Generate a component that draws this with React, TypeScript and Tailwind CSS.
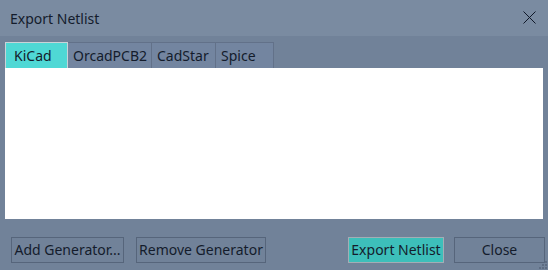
const tabs = [
  { name: 'KiCad', w: 'w-[63px]' },
  { name: 'OrcadPCB2', w: 'w-[84px]' },
  { name: 'CadStar', w: 'w-[64px]' },
  { name: 'Spice', w: 'w-[58px]' },
]

function Btn({ label, w, primary }: { label: string; w: string; primary?: boolean }) {
  return (
    <button
      className={`h-[26px] ${w} flex items-center justify-center border text-[14px] leading-none text-[#141c2c] ${
        primary ? 'bg-[#3dbfba] border-[#a3adb5]' : 'bg-[#718299] border-[#56657b]'
      }`}
    >
      {label}
    </button>
  )
}

export default function App() {
  return (
    <div
      className="w-[548px] h-[270px] flex flex-col bg-[#718299] text-[#141c2c] relative"
      style={{ fontFamily: '"Noto Sans", "Open Sans", sans-serif' }}
    >
      {/* Title bar */}
      <div className="h-[36px] flex items-center justify-between bg-[#7a8ba1] pl-[10px] pr-[12px]">
        <span className="text-[14px]">Export Netlist</span>
        <svg width="13" height="13" viewBox="0 0 13 13" className="mt-[-1px]">
          <path d="M0.5 0.5 L12.5 12.5 M12.5 0.5 L0.5 12.5" stroke="#101828" strokeWidth="1" />
        </svg>
      </div>

      {/* Tabs */}
      <div className="flex pl-[5px] pt-[6px] h-[32px]">
        {tabs.map((t, i) => (
          <div
            key={t.name}
            className={`h-[26px] ${t.w} flex items-center text-[14px] border-r border-t ${
              i === 0
                ? 'bg-[#4fd8d5] border-l border-[#c9d3d8] pl-[8px]'
                : 'bg-[#7385a0] border-[#627189] pl-[5px]'
            }`}
          >
            {t.name}
          </div>
        ))}
      </div>

      {/* Content */}
      <div className="mx-[5px] h-[151px] bg-white" />

      {/* Buttons */}
      <div className="flex items-center px-[11px] pt-[18px]">
        <div className="flex gap-[12px]">
          <Btn label="Add Generator..." w="w-[113px]" />
          <Btn label="Remove Generator" w="w-[130px]" />
        </div>
        <div className="flex gap-[10px] ml-auto mr-[-8px]">
          <Btn label="Export Netlist" w="w-[96px]" primary />
          <Btn label="Close" w="w-[91px]" />
        </div>
      </div>

      {/* Resize grip */}
      <svg className="absolute right-[1px] bottom-[1px]" width="8" height="8" viewBox="0 0 8 8">
        <g fill="#5d6c82">
          <rect x="6" y="0" width="2" height="2" />
          <rect x="3" y="3" width="2" height="2" />
          <rect x="6" y="3" width="2" height="2" />
          <rect x="0" y="6" width="2" height="2" />
          <rect x="3" y="6" width="2" height="2" />
          <rect x="6" y="6" width="2" height="2" />
        </g>
      </svg>
    </div>
  )
}
